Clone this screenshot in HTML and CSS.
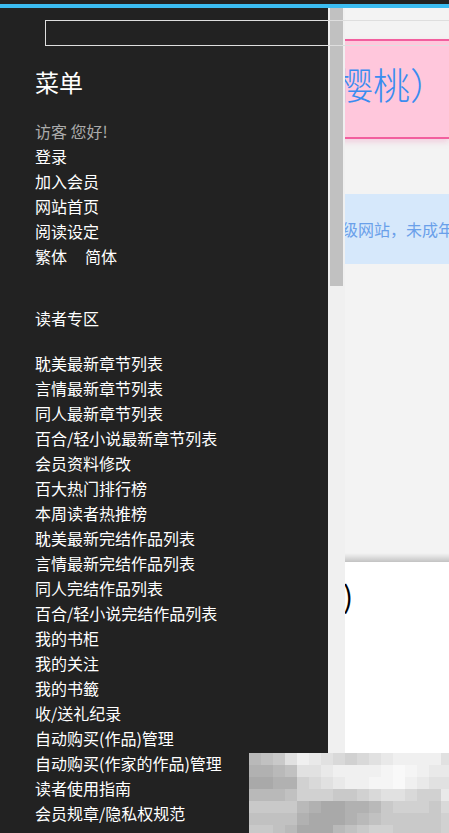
FILE: index.html
```html
<!DOCTYPE html>
<html lang="zh-CN">
<head>
<meta charset="utf-8">
<title>菜单</title>
<link rel="stylesheet" href="styles.css">
</head>
<body>
<div class="topbar"></div>
<main class="page">
  <section class="texture">
    <div class="banner">（樱桃）</div>
    <div class="notice">本站为分级网站，未成年请勿进入</div>
  </section>
  <h2 class="title">文案（樱桃)</h2>
  <p class="foot">本作品第一页未读死　举报</p>
</main>

<aside class="sidebar">
  <input class="search" type="text" aria-label="搜索">
  <h1 class="menu-title">菜单</h1>
  <ul class="links">
    <li class="guest">访客 您好!</li>
    <li><a href="#">登录</a></li>
    <li><a href="#">加入会员</a></li>
    <li><a href="#">网站首页</a></li>
    <li><a href="#">阅读设定</a></li>
    <li><a href="#">繁体</a><a class="sp" href="#">简体</a></li>
  </ul>
  <h3 class="zone">读者专区</h3>
  <ul class="links list">
    <li><a href="#">耽美最新章节列表</a></li>
    <li><a href="#">言情最新章节列表</a></li>
    <li><a href="#">同人最新章节列表</a></li>
    <li><a href="#">百合/轻小说最新章节列表</a></li>
    <li><a href="#">会员资料修改</a></li>
    <li><a href="#">百大热门排行榜</a></li>
    <li><a href="#">本周读者热推榜</a></li>
    <li><a href="#">耽美最新完结作品列表</a></li>
    <li><a href="#">言情最新完结作品列表</a></li>
    <li><a href="#">同人完结作品列表</a></li>
    <li><a href="#">百合/轻小说完结作品列表</a></li>
    <li><a href="#">我的书柜</a></li>
    <li><a href="#">我的关注</a></li>
    <li><a href="#">我的书籤</a></li>
    <li><a href="#">收/送礼纪录</a></li>
    <li><a href="#">自动购买(作品)管理</a></li>
    <li><a href="#">自动购买(作家的作品)管理</a></li>
    <li><a href="#">读者使用指南</a></li>
    <li><a href="#">会员规章/隐私权规范</a></li>
  </ul>
  <div class="scrollbar"><div class="thumb"></div></div>
</aside>

<div class="mosaic">
  <i class="s3"></i><i class="s4"></i><i class="s5"></i><i class="s8"></i><i class="s10"></i><i class="s9"></i><i class="s8"></i><i class="s7"></i><i class="s6"></i><i class="s7"></i><i class="s8"></i><i class="s9"></i><i class="s10"></i><i class="s10"></i><i class="s10"></i><i class="s10"></i><i class="s8"></i>
  <i class="s2"></i><i class="s2"></i><i class="s3"></i><i class="s4"></i><i class="s8"></i><i class="s8"></i><i class="s9"></i><i class="s10"></i><i class="s10"></i><i class="s10"></i><i class="s10"></i><i class="s11"></i><i class="s12"></i><i class="s11"></i><i class="s10"></i><i class="s9"></i><i class="s9"></i>
  <i class="s1"></i><i class="s1"></i><i class="s2"></i><i class="s2"></i><i class="s6"></i><i class="s7"></i><i class="s8"></i><i class="s9"></i><i class="s10"></i><i class="s10"></i><i class="s11"></i><i class="s11"></i><i class="s12"></i><i class="s10"></i><i class="s9"></i><i class="s8"></i><i class="s8"></i>
  <i class="s3"></i><i class="s3"></i><i class="s3"></i><i class="s4"></i><i class="s6"></i><i class="s6"></i><i class="s6"></i><i class="s5"></i><i class="s5"></i><i class="s6"></i><i class="s7"></i><i class="s8"></i><i class="s8"></i><i class="s7"></i><i class="s6"></i><i class="s6"></i><i class="s9"></i>
  <i class="s5"></i><i class="s5"></i><i class="s5"></i><i class="s5"></i><i class="s3"></i><i class="s2"></i><i class="s1"></i><i class="s1"></i><i class="s2"></i><i class="s2"></i><i class="s3"></i><i class="s5"></i><i class="s6"></i><i class="s6"></i><i class="s6"></i><i class="s5"></i><i class="s7"></i>
  <i class="s4"></i><i class="s4"></i><i class="s4"></i><i class="s4"></i><i class="s2"></i><i class="s1"></i><i class="s1"></i><i class="s1"></i><i class="s2"></i><i class="s3"></i><i class="s4"></i><i class="s5"></i><i class="s5"></i><i class="s5"></i><i class="s5"></i><i class="s5"></i><i class="s6"></i>
  <i class="s5"></i><i class="s5"></i><i class="s4"></i><i class="s3"></i><i class="s1"></i><i class="s1"></i><i class="s1"></i><i class="s3"></i><i class="s4"></i><i class="s5"></i><i class="s6"></i><i class="s6"></i><i class="s5"></i><i class="s5"></i><i class="s5"></i><i class="s5"></i><i class="s6"></i>
</div>
</body>
</html>
```

FILE: styles.css
```css
* { box-sizing: border-box; }
html, body { margin: 0; padding: 0; }
body {
  width: 449px;
  height: 833px;
  overflow: hidden;
  position: relative;
  background: #fff;
  font-family: "Noto Sans CJK SC", "Noto Sans", sans-serif;
  font-size: 16px;
}

.topbar {
  height: 8px;
  border-top: 4px solid #222;
  background: #3bbcf1;
}

/* underlying page */
.page { width: 449px; }
.texture {
  height: 554px;
  padding-top: 31px;
  background:
    linear-gradient(to bottom, rgba(0,0,0,0) 0, rgba(0,0,0,0) 545px, rgba(0,0,0,0.06) 548px, rgba(0,0,0,0.2) 554px),
    #f3f3f3;
}
.banner {
  height: 100px;
  background: #ffc7dc;
  border-top: 2px solid #f25f9e;
  border-bottom: 2px solid #f25f9e;
  box-shadow: 0 3px 6px rgba(240, 96, 160, 0.25);
  color: #3a8cf0;
  font-size: 37px;
  font-weight: 300;
  line-height: 86px;
  padding-left: 299px;
  white-space: nowrap;
}
.notice {
  margin-top: 55px;
  height: 70px;
  background: #d6e8fb;
  color: #6aa0ea;
  font-size: 16px;
  line-height: 70px;
  padding-left: 278px;
  white-space: nowrap;
  overflow: hidden;
}
.title {
  margin: 13px 0 0;
  padding-left: 193px;
  font-size: 30px;
  line-height: 40px;
  font-weight: normal;
  color: #000;
  white-space: nowrap;
}
.foot {
  margin: 133px 0 0;
  padding-left: 233px;
  font-size: 16px;
  line-height: 24px;
  color: #333;
  white-space: nowrap;
}

/* sidebar overlay */
.sidebar {
  position: absolute;
  top: 8px;
  left: 0;
  bottom: 0;
  width: 328px;
  background: #222;
  padding: 12px 0 0 35px;
  z-index: 10;
}
.search {
  position: relative;
  z-index: 2;
  display: block;
  margin: 0 0 0 10px;
  width: 520px;
  height: 26px;
  background: transparent;
  border: 1px solid #dedede;
  outline: none;
  padding: 0;
}
.menu-title {
  margin: 17.5px 0 0;
  font-size: 24px;
  line-height: 36px;
  font-weight: normal;
  color: #fff;
}
.links {
  list-style: none;
  margin: 19px 0 0;
  padding: 0;
}
.links li {
  font-size: 16px;
  line-height: 25px;
  height: 25px;
  white-space: nowrap;
}
.links a { color: #fff; text-decoration: none; }
.links .guest { color: #ababab; }
.links .sp { margin-left: 18px; }
.zone {
  margin: 37px 0 0;
  font-size: 16px;
  line-height: 25px;
  font-weight: normal;
  color: #fff;
}
.links.list { margin-top: 20px; }

.scrollbar {
  position: absolute;
  top: 0;
  bottom: 0;
  left: 328px;
  width: 17px;
  background: #f0f0f0;
  z-index: 1;
}
.thumb {
  margin-left: 2px;
  width: 13px;
  height: 278px;
  background: #c1c1c1;
}

/* pixelated watermark */
.mosaic {
  position: absolute;
  left: 249px;
  top: 753px;
  display: grid;
  grid-template-columns: repeat(17, 12px);
  grid-auto-rows: 12px;
  z-index: 20;
}
.mosaic i { display: block; }
.s1 { background: #a9a9a9; }
.s2 { background: #b1b1b1; }
.s3 { background: #b9b9b9; }
.s4 { background: #c1c1c1; }
.s5 { background: #c9c9c9; }
.s6 { background: #d1d1d1; }
.s7 { background: #d9d9d9; }
.s8 { background: #e1e1e1; }
.s9 { background: #e9e9e9; }
.s10 { background: #f0f0f0; }
.s11 { background: #f5f5f5; }
.s12 { background: #f9f9f9; }
```
